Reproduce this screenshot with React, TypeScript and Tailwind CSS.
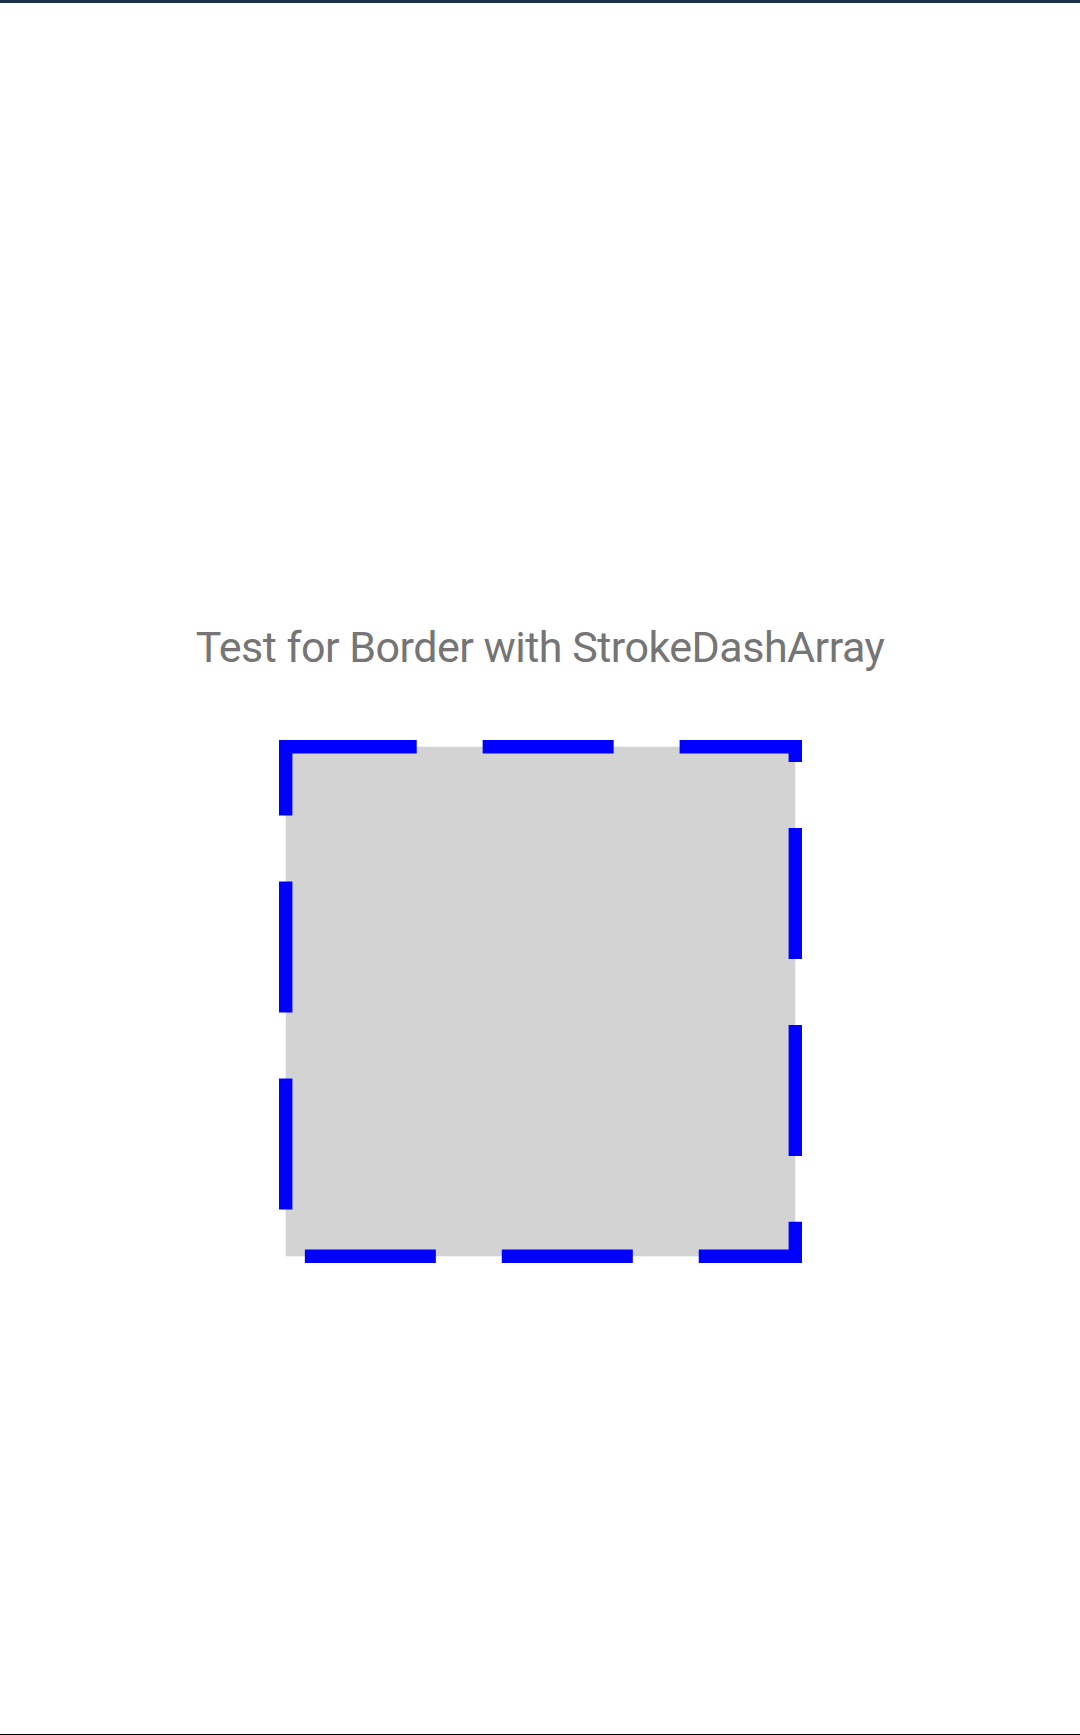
export default function App() {
  return (
    <div className="flex flex-col h-[1735px] w-[1080px] bg-white overflow-hidden">
      <div className="h-[3px] w-full bg-[#1b304b] shrink-0" />
      <div
        className="mt-[623px] h-[43px] text-center text-[43px] leading-[43px] tracking-[-0.5px] text-[#757575] whitespace-nowrap"
        style={{ fontFamily: 'Roboto, "Noto Sans", sans-serif' }}
      >
        Test for Border with StrokeDashArray
      </div>
      <div className="mt-[71px] flex justify-center">
        <svg width="523" height="523" viewBox="0 0 523 523" className="block">
          <rect
            x="6.7"
            y="6.7"
            width="509.6"
            height="509.6"
            fill="#d3d3d3"
            stroke="#0000ff"
            strokeWidth="13.4"
            strokeDasharray="131 65.95"
            strokeLinejoin="miter"
          />
        </svg>
      </div>
      <div className="mt-auto h-px w-full bg-black shrink-0" />
    </div>
  );
}
